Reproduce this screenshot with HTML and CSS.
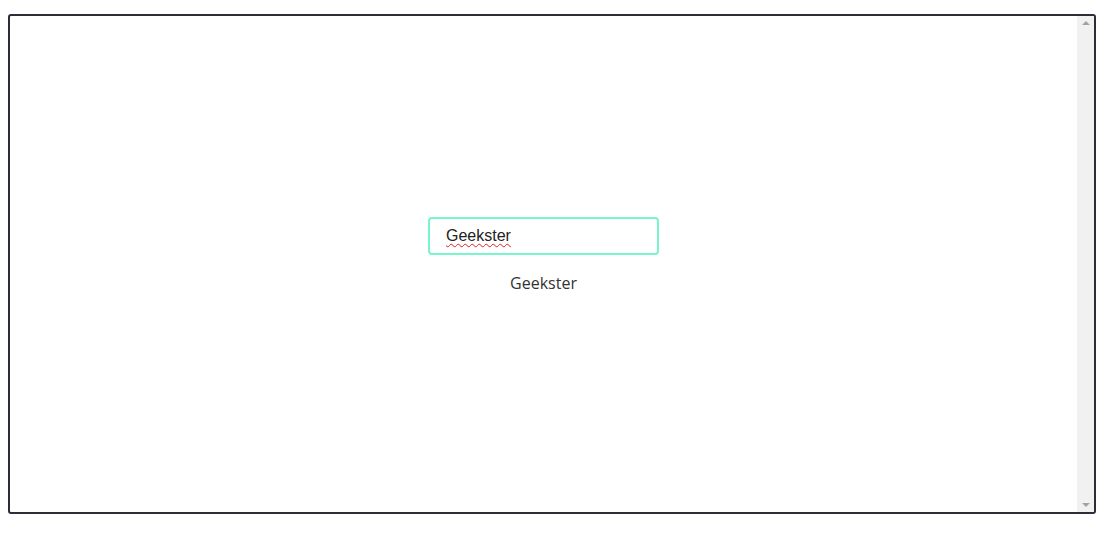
FILE: index.html
```html
<!DOCTYPE html>
<html>
<head>
<meta charset="utf-8">
<link rel="stylesheet" href="styles.css">
</head>
<body>
<div class="frame">
  <div class="content">
    <div class="field" role="textbox"><span class="misspelled">Geekster</span></div>
    <p class="echo">Geekster</p>
  </div>
  <div class="scrollbar">
    <span class="arrow up"></span>
    <span class="arrow down"></span>
  </div>
</div>
</body>
</html>
```
FILE: styles.css
```css
html, body {
  background: #ffffff;
}
body {
  margin: 14px 8px;
}
.frame {
  width: 1088px;
  height: 500px;
  box-sizing: border-box;
  border: 2px solid #302b3b;
  border-radius: 3px;
  display: flex;
  overflow: hidden;
}
.content {
  flex: 1;
  display: flex;
  flex-direction: column;
  align-items: center;
  padding-top: 201px;
}
.field {
  width: 231px;
  height: 38px;
  box-sizing: border-box;
  border: 2px solid #7af5c9;
  border-radius: 4px;
  padding: 0 16px;
  display: flex;
  align-items: center;
  font-family: "Liberation Sans", Arial, sans-serif;
  font-size: 16px;
  color: #222;
}
.misspelled {
  text-decoration: underline wavy #e02020;
  text-decoration-thickness: 1px;
  text-underline-offset: 2px;
  text-decoration-skip-ink: none;
}
.echo {
  margin: 17px 0 0;
  font-family: "Open Sans", sans-serif;
  font-size: 16px;
  color: #333;
}
.scrollbar {
  width: 17px;
  background: #f1f1f1;
  display: flex;
  flex-direction: column;
  justify-content: space-between;
  align-items: center;
  padding: 5px 0;
}
.arrow {
  width: 0;
  height: 0;
  border-left: 4px solid transparent;
  border-right: 4px solid transparent;
}
.arrow.up {
  border-bottom: 4px solid #a3a3a3;
}
.arrow.down {
  border-top: 4px solid #a3a3a3;
}
```
